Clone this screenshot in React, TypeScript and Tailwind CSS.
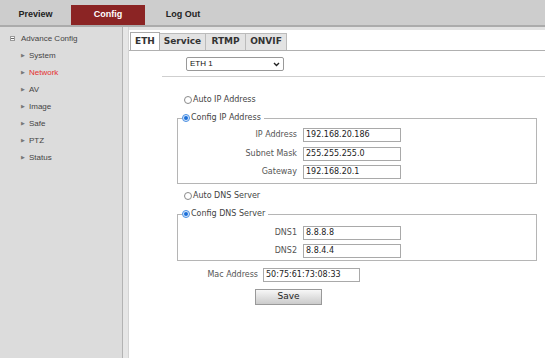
import React from 'react';

const menu = ['System', 'Network', 'AV', 'Image', 'Safe', 'PTZ', 'Status'];

function Radio({ checked }: { checked?: boolean }) {
  return checked ? (
    <span className="flex h-[8px] w-[8px] items-center justify-center rounded-full border border-[#4a90e2] bg-[#dbe9fb]">
      <span className="h-[4px] w-[4px] rounded-full bg-[#1a6fd9]" />
    </span>
  ) : (
    <span className="h-[8px] w-[8px] rounded-full border border-[#8a8a8a] bg-white" />
  );
}

function Field({ label, value, mt }: { label: string; value: string; mt: string }) {
  return (
    <div className={`flex items-center ${mt}`}>
      <div className="w-[119px] text-right text-[#555]">{label}</div>
      <div className="ml-[6px] flex h-[14px] w-[98px] items-center border border-[#a9a9a9] bg-white pl-[2px] text-[#222]">
        {value}
      </div>
    </div>
  );
}

export default function App() {
  return (
    <div className="flex h-[358px] w-[545px] flex-col overflow-hidden bg-white font-['Liberation_Sans',Arial,sans-serif]">
      {/* top bar */}
      <div className="flex h-[25px] shrink-0 items-end bg-[#cdcdcd] text-[9px] font-bold text-[#222]">
        <div className="flex h-[20px] w-[71px] items-center justify-center">Preview</div>
        <div className="flex h-[20px] w-[74px] items-center justify-center bg-[#8b2424] text-white">Config</div>
        <div className="flex h-[20px] w-[76px] items-center justify-center">Log Out</div>
      </div>
      <div className="h-[2px] shrink-0 bg-[#ababab]" />
      <div className="flex min-h-0 flex-1">
        {/* sidebar */}
        <div className="w-[122px] shrink-0 bg-[#dcdcdc] pt-[3px] text-[8px] text-[#444]">
          <div className="flex h-[17px] items-center pl-[10px]">
            <span className="mr-[6px] flex h-[5px] w-[5px] items-center justify-center border border-[#999] bg-white">
              <span className="h-px w-[3px] bg-[#666]" />
            </span>
            Advance Config
          </div>
          {menu.map((m) => (
            <div key={m} className="flex h-[17px] items-center pl-[21px]">
              <span className="mr-[4px] text-[5px] text-[#777]">▶</span>
              <span className={m === 'Network' ? 'text-[#e53030]' : ''}>{m}</span>
            </div>
          ))}
        </div>
        <div className="w-px shrink-0 bg-[#b3b3b3]" />
        <div className="w-[6px] shrink-0 border-r border-[#d4d4d4] bg-[#e6e6e6]" />
        {/* main */}
        <div className="flex min-w-0 flex-1 flex-col">
          <div className="h-[3px] shrink-0 bg-[#e2e2e2]" />
          <div className="ml-px mt-[3px] flex h-[17px] items-end font-['DejaVu_Sans',Verdana,sans-serif] text-[9px] font-bold text-[#333]">
            <div className="relative z-10 flex h-[18px] w-[30px] items-center justify-center border border-b-0 border-[#aaa] bg-white">ETH</div>
            <div className="flex h-[17px] w-[46px] items-center justify-center border border-b-0 border-l-0 border-[#bbb] bg-[#e3e3e3]">Service</div>
            <div className="flex h-[17px] w-[40px] items-center justify-center border border-b-0 border-l-0 border-[#bbb] bg-[#e3e3e3]">RTMP</div>
            <div className="flex h-[17px] w-[41px] items-center justify-center border border-b-0 border-l-0 border-[#bbb] bg-[#e3e3e3]">ONVIF</div>
          </div>
          <div className="h-px shrink-0 bg-[#b0b0b0]" />
          <div className="font-['DejaVu_Sans',Verdana,sans-serif] text-[8px]">
            <div className="ml-[57px] mt-[6px] flex h-[14px] w-[98px] items-center justify-between rounded-[2px] border border-[#999] bg-white px-[3px] font-['Liberation_Sans',Arial,sans-serif] text-[8px] text-[#111]">
              <span>ETH 1</span>
              <svg width="7" height="5" viewBox="0 0 7 5" fill="none" stroke="#222" strokeWidth="1.4">
                <path d="M1 1l2.5 2.5L6 1" />
              </svg>
            </div>
            <div className="ml-[33px] mt-[5px] h-px bg-[#cfcfcf]" />

            <div className="ml-[55px] mt-[17px] flex h-[12px] items-center gap-[1px] text-[#444]">
              <Radio />
              <span>Auto IP Address</span>
            </div>
            <fieldset className="ml-[48px] mr-[8px] mt-[6px] border border-[#b5b5b5] px-0 pb-[4px] pt-0">
              <legend className="ml-[4px] flex h-[12px] items-center gap-[1px] pr-[3px] text-[#444]">
                <Radio checked />
                <span>Config IP Address</span>
              </legend>
              <Field label="IP Address" value="192.168.20.186" mt="mt-[4px]" />
              <Field label="Subnet Mask" value="255.255.255.0" mt="mt-[5px]" />
              <Field label="Gateway" value="192.168.20.1" mt="mt-[4px]" />
            </fieldset>

            <div className="ml-[55px] mt-[6px] flex h-[12px] items-center gap-[1px] text-[#444]">
              <Radio />
              <span>Auto DNS Server</span>
            </div>
            <fieldset className="ml-[48px] mr-[8px] mt-[6px] border border-[#b5b5b5] px-0 pb-[2px] pt-0">
              <legend className="ml-[4px] flex h-[12px] items-center gap-[1px] pr-[3px] text-[#444]">
                <Radio checked />
                <span>Config DNS Server</span>
              </legend>
              <Field label="DNS1" value="8.8.8.8" mt="mt-[6px]" />
              <Field label="DNS2" value="8.8.4.4" mt="mt-[4px]" />
            </fieldset>

            <div className="mt-[7px] flex items-center">
              <div className="w-[134px] pr-[5px] text-right text-[#555]">Mac Address</div>
              <div className="flex h-[14px] w-[97px] items-center border border-[#a9a9a9] bg-white pl-[2px] text-[#222]">
                50:75:61:73:08:33
              </div>
            </div>
            <button className="ml-[126px] mt-[7px] flex h-[16px] w-[67px] items-center justify-center border border-[#999] bg-gradient-to-b from-[#f7f7f7] to-[#cbcbcb] text-[9px] text-[#222]">
              Save
            </button>
          </div>
        </div>
      </div>
    </div>
  );
}
